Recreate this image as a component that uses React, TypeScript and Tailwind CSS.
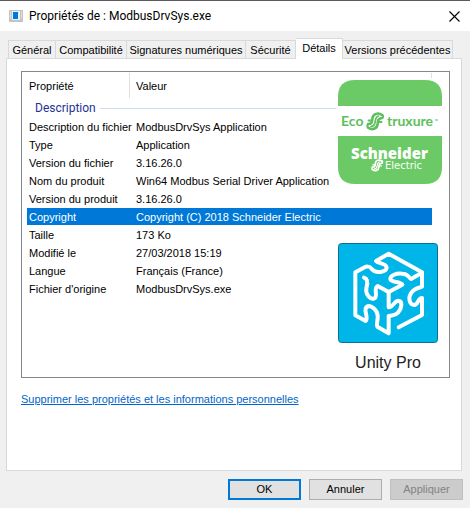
import { useState } from "react";

const tabs = [
  { name: "Général", width: "w-[48px]" },
  { name: "Compatibilité", width: "w-[71px]" },
  { name: "Signatures numériques", width: "w-[119px]" },
  { name: "Sécurité", width: "w-[50px]" },
  { name: "Détails", width: "w-[47px]" },
  { name: "Versions précédentes", width: "w-[110px]" },
];

const properties = [
  ["Description du fichier", "ModbusDrvSys Application"],
  ["Type", "Application"],
  ["Version du fichier", "3.16.26.0"],
  ["Nom du produit", "Win64 Modbus Serial Driver Application"],
  ["Version du produit", "3.16.26.0"],
  ["Copyright", "Copyright (C) 2018 Schneider Electric"],
  ["Taille", "173 Ko"],
  ["Modifié le", "27/03/2018 15:19"],
  ["Langue", "Français (France)"],
  ["Fichier d'origine", "ModbusDrvSys.exe"],
];

function AppIcon() {
  return (
    <svg width="14" height="12" viewBox="0 0 14 12" aria-hidden="true">
      <rect width="14" height="12" fill="#c3c3c3" />
      <rect x="3" y="1" width="8" height="9" fill="#e9f1f8" />
      <rect x="4" y="2" width="5" height="7" fill="#0078d7" />
      <path d="M1 2h1M1 4h1M1 6h1M1 8h1M12 2h1M12 4h1M12 6h1M12 8h1" stroke="#f4f4f4" />
    </svg>
  );
}

function StruxureMark() {
  return (
    <g fill="none" stroke="currentColor" strokeLinecap="round">
      <path d="M16 3C12 0 7 2 6.500 6C6 10 6 12 2 12" strokeWidth="2.600" />
      <path d="M2 15.500C6 18.500 11 17 11.500 12.500C12 8.500 12 6.500 16 6" strokeWidth="2.600" />
      <path d="M12.500 4C9.500 4.500 9.500 8 9 10.500C8.500 13 7.500 14.500 5 14.500" strokeWidth="1.700" />
      <path d="M2.500 8.500H6M12 10H15.500M16.500 3Q18 4.500 16.500 6M2 12.500Q.5 14 2 15.500" strokeWidth="1.800" />
    </g>
  );
}

function SchneiderLogo() {
  return (
    <svg width="104" height="105" viewBox="0 0 104 105" role="img" aria-label="EcoStruxure, Schneider Electric">
      <path d="M0 26V17Q0 0 17 0H87Q104 0 104 17V26Z" fill="#6bca66" />
      <path d="M0 56H104V87Q104 104 87 104H17Q0 104 0 87Z" fill="#6bca66" />
      <g fill="#5dbf5c" fontFamily="Lato, sans-serif" fontSize="14" fontWeight="700">
        <text x="3" y="46">Eco</text>
        <text x="49" y="46">truxure</text>
      </g>
      <path d="M97 40h3" stroke="#5dbf5c" />
      <g transform="translate(28 32)" color="#5dbf5c">
        <StruxureMark />
      </g>
      <g fill="#fff">
        <text x="13" y="79" fontFamily="Open Sans, sans-serif" fontSize="15" fontWeight="800">Schneider</text>
        <text x="47" y="89" fontFamily="DejaVu Sans, sans-serif" fontSize="10">Electric</text>
      </g>
      <g transform="translate(33 79) scale(.68)" color="#fff">
        <StruxureMark />
      </g>
    </svg>
  );
}

function UnityLogo() {
  return (
    <svg width="100" height="100" viewBox="24 22 300 300" role="img" aria-label="Unity Pro">
      <rect x="25.5" y="23.5" width="297" height="297" rx="9" fill="#00b5e8" stroke="#0b6f94" strokeWidth="3" />
      <g fill="none" stroke="#fff" strokeWidth="12" strokeLinecap="round" strokeLinejoin="round">
        <path d="M206 275L276 238V187C264 186 265 207 254 208C236 207 234 184 245 170C254 157 265 158 276 153V110L176 54L138 76C143 84 169 82 170 96C169 110 138 114 127 102C121 95 118 90 107 93L76 110V239L107 256C116 246 103 230 107 218C115 204 134 215 141 231C148 248 137 263 142 273L176 293V241C188 238 194 242 204 231C216 217 219 196 204 195C192 196 190 215 176 215V169" />
        <path d="M276 111L243 130C233 126 239 115 217 114C199 112 180 119 181 131C184 142 210 136 217 147L176 169L143 151C128 158 147 184 132 189C118 192 106 172 109 158C114 141 112 129 102 126" />
      </g>
    </svg>
  );
}

export default function App() {
  const [active, setActive] = useState("Détails");
  const [selected, setSelected] = useState("Copyright");
  const button = "h-[21px] w-[73px] border text-center leading-[19px]";

  return (
    <div className="min-h-screen bg-[#f0f0f0] font-['Liberation_Sans',Arial,sans-serif] text-[11px] leading-4 text-black">
      <header className="flex h-[31px] items-center border-t border-[#5c5a5c] bg-white pr-[10px] pl-[9px]">
        <AppIcon />
        <h1 className="ml-[6px] flex-1 font-[Roboto,'Noto_Sans',sans-serif] text-[12px]">
          Propriétés de : ModbusDrvSys.exe
        </h1>
        <button type="button" aria-label="Fermer">
          <svg width="11" height="11" viewBox="0 0 11 11" aria-hidden="true">
            <path d="M.5.5L10.5 10.5M10.5.5L.5 10.5" stroke="#000" strokeWidth="1.1" />
          </svg>
        </button>
      </header>

      <main className="pt-[7px] pr-[8px] pl-[6px]">
        <div role="tablist" className="flex items-end pl-[2px]">
          {tabs.map((tab) => (
            <button
              key={tab.name}
              type="button"
              role="tab"
              aria-selected={active === tab.name}
              onClick={() => setActive(tab.name)}
              className={`${tab.width} shrink-0 border-t border-r border-[#d9d9d9] whitespace-nowrap first:border-l ${
                active === tab.name ? "-mb-px h-[21px] bg-white pb-[2px]" : "h-[18px] bg-[#f0f0f0]"
              }`}
            >
              {tab.name}
            </button>
          ))}
        </div>

        <section className="flex h-[413px] flex-col items-start border border-[#d9d9d9] bg-white px-[14px] pt-[12px]">
          <div className="relative mr-[-3px] h-[307px] self-stretch border border-[#828790] pt-px pl-[5px] pr-[17px]">
            <table className="w-full table-fixed border-separate border-spacing-0 text-left">
              <thead>
                <tr className="h-[25px]">
                  <th scope="col" className="w-[103px] border-r border-[#e0e0e0] p-0 pl-[2px] font-normal">Propriété</th>
                  <th scope="col" className="border-r border-[#e0e0e0] p-0 pl-[6px] font-normal">Valeur</th>
                </tr>
              </thead>
              <tbody>
                <tr className="h-[20px]">
                  <th colSpan={2} className="p-0 font-normal">
                    <div className="flex items-center gap-1 pl-[8px] font-[Roboto,'Noto_Sans',sans-serif] text-[12px] text-[#1e3296]">
                      Description
                      <span className="h-px flex-1 bg-[#d0dcea]" />
                    </div>
                  </th>
                </tr>
                {properties.map(([name, value]) => (
                  <tr
                    key={name}
                    onClick={() => setSelected(name)}
                    className={`h-[18px] ${selected === name ? "bg-[#0078d7] text-white" : ""}`}
                  >
                    <th scope="row" className="border-b border-white p-0 pl-[2px] font-normal whitespace-nowrap">{name}</th>
                    <td className="border-b border-white p-0 pl-[6px] whitespace-nowrap">{value}</td>
                  </tr>
                ))}
              </tbody>
            </table>
            <div className="absolute top-[6px] right-[5px] bg-white pt-[2px] pr-[2px] pl-[2px]">
              <SchneiderLogo />
            </div>
            <figure className="absolute right-[11px] bottom-[3px] flex flex-col items-center bg-white">
              <UnityLogo />
              <figcaption className="mt-[9px] text-[16px] leading-[22px] text-[#222]">Unity Pro</figcaption>
            </figure>
          </div>
          <a href="#supprimer" className="mt-[13px] text-[#0066cc] underline">
            Supprimer les propriétés et les informations personnelles
          </a>
        </section>
      </main>

      <footer className="flex justify-end gap-2 pt-2 pr-[7px]">
        <button type="button" className="h-[21px] w-[73px] border-2 border-[#0078d7] bg-[#e1e1e1] leading-[17px]">OK</button>
        <button type="button" className={`${button} border-[#adadad] bg-[#e1e1e1]`}>Annuler</button>
        <button type="button" disabled className={`${button} border-[#bfbfbf] bg-[#cccccc] text-[#838383]`}>Appliquer</button>
      </footer>
    </div>
  );
}
